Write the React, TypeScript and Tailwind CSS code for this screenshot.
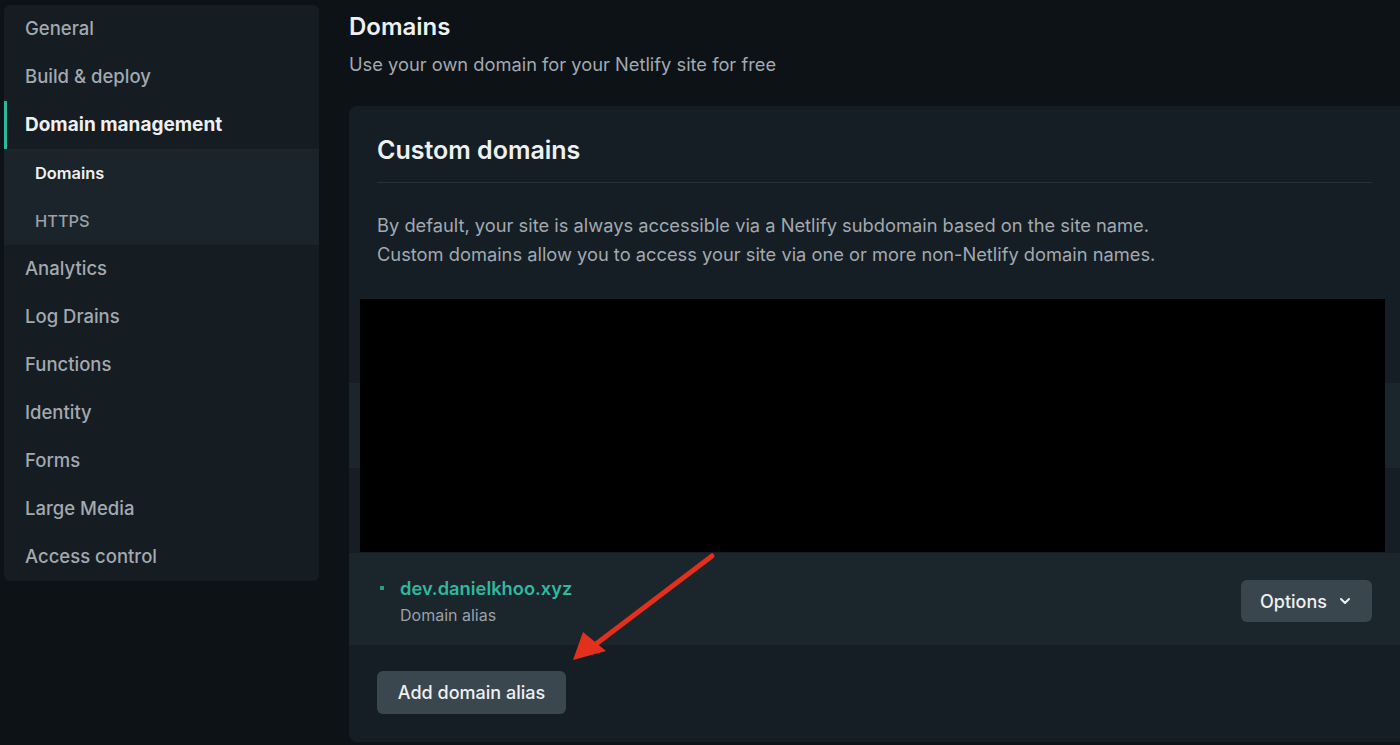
import { ChevronDown } from 'lucide-react';

const mainItems = ['General', 'Build & deploy'];
const lowerItems = ['Analytics', 'Log Drains', 'Functions', 'Identity', 'Forms', 'Large Media', 'Access control'];

function Sidebar() {
  return (
    <aside className="ml-1 mt-[5px] w-[315px] shrink-0 self-start overflow-hidden rounded-md bg-[#151c22] text-[18.5px]">
      {mainItems.map(item => (
        <div key={item} className="flex h-12 items-center px-[21px] font-medium text-[#a2a9af]">
          {item}
        </div>
      ))}
      <div className="relative flex h-12 items-center px-[21px] text-[19px] font-bold text-[#eef1f2]">
        <span className="absolute left-0 top-0 h-full w-[3px] bg-[#30b89f]" />
        Domain management
      </div>
      <div className="bg-[#1b242b] text-[16.4px] font-medium">
        <div className="flex h-12 items-center px-[31px] font-semibold text-[#eef1f2]">Domains</div>
        <div className="flex h-12 items-center px-[31px] text-[#9aa1a7]">HTTPS</div>
      </div>
      {lowerItems.map(item => (
        <div key={item} className="flex h-12 items-center px-[21px] font-medium text-[#a2a9af]">
          {item}
        </div>
      ))}
    </aside>
  );
}

function DomainRow() {
  return (
    <div className="flex h-[92px] items-center justify-between bg-[#1b252c] pl-[31px] pr-[28px] pt-[4px]">
      <div className="mt-[2px] flex items-start gap-[16px]">
        <span className="mt-[11px] h-[4px] w-[4px] bg-[#2a9c86]" />
        <div className="flex flex-col">
          <span className="text-[18.3px] font-semibold leading-[26px] text-[#30b89f]">dev.danielkhoo.xyz</span>
          <span className="text-[16px] leading-[28px] text-[#9aa1a7]">Domain alias</span>
        </div>
      </div>
      <button className="flex h-[42px] w-[131px] items-center justify-center gap-[10px] rounded-md bg-[#3a464d] text-[18px] font-medium text-[#eef1f2]">
        Options
        <ChevronDown className="h-4 w-4" strokeWidth={3} />
      </button>
    </div>
  );
}

export default function App() {
  return (
    <div
      className="relative flex h-[745px] w-[1400px] gap-[30px] overflow-hidden bg-[#0d1217]"
      style={{ fontFamily: 'Inter, "Noto Sans", sans-serif' }}
    >
      <Sidebar />

      <main className="flex min-w-0 flex-1 flex-col">
        <h1 className="mt-[11px] text-[24px] font-semibold leading-[32px] text-[#eef1f2]">Domains</h1>
        <p className="mt-[8px] text-[18.3px] leading-[26px] text-[#a2a9af]">
          Use your own domain for your Netlify site for free
        </p>

        <section className="mt-[29px] flex flex-col rounded-l-lg bg-[#161e25] pb-[28px]">
          <div className="mx-[28px] mt-[28px] border-b border-[#273139] pb-[16px]">
            <h2 className="text-[25px] font-semibold leading-[32px] text-[#eef1f2]">Custom domains</h2>
          </div>

          <div className="mx-[28px] mt-[28px] text-[18.3px] leading-[29px] text-[#a2a9af]">
            <p>By default, your site is always accessible via a Netlify subdomain based on the site name.</p>
            <p>Custom domains allow you to access your site via one or more non-Netlify domain names.</p>
          </div>

          <div className="relative mt-[30px] flex flex-col">
            <div className="h-[84px]" />
            <div className="h-[85px] bg-[#1b252c]" />
            <div className="h-[85px]" />
            {/* redacted block */}
            <div className="absolute left-[11px] top-0 h-[253px] w-[1025px] bg-black" />
            <DomainRow />
          </div>

          <div className="mx-[28px] mt-[26px]">
            <button className="h-[43px] w-[189px] rounded-md bg-[#3b474e] text-[18px] font-medium text-[#eef1f2]">
              Add domain alias
            </button>
          </div>
        </section>
      </main>

      <svg className="pointer-events-none absolute left-0 top-0" width="1400" height="745">
        <line x1="712" y1="556" x2="596" y2="644" stroke="#e3301c" strokeWidth="5" strokeLinecap="round" />
        <polygon points="573,660 583,632 606,651" fill="#e3301c" />
      </svg>
    </div>
  );
}
